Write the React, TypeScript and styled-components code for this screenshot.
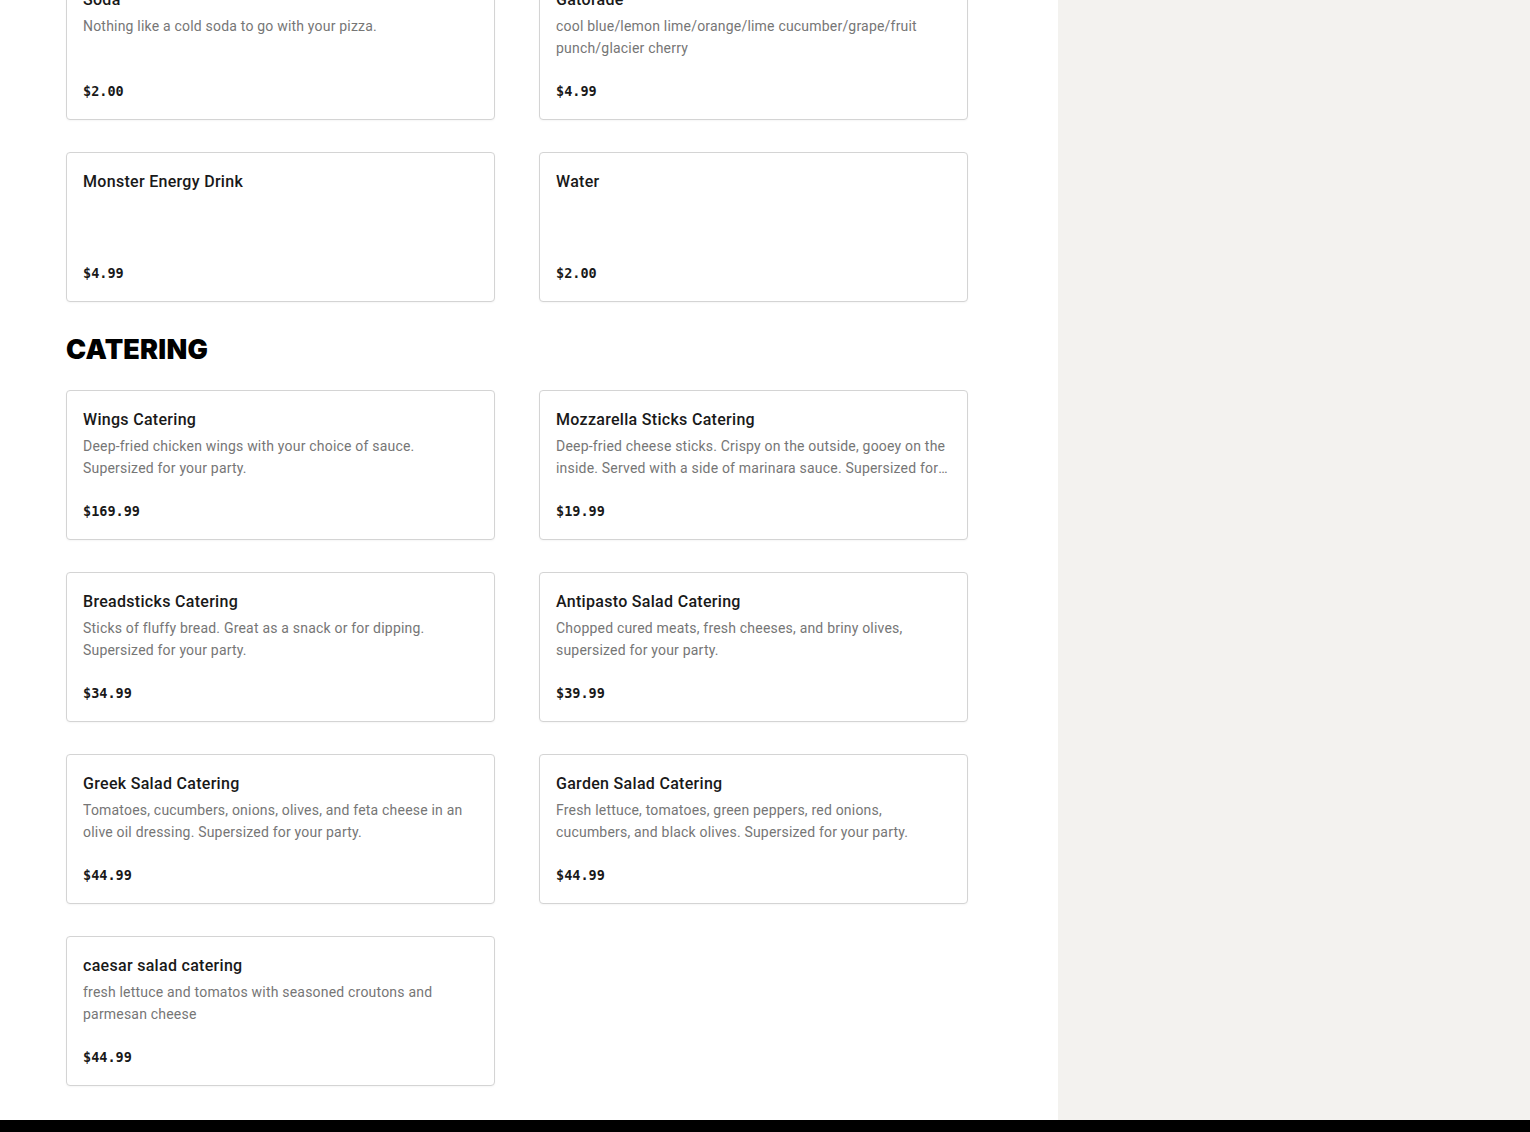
import React from "react";
import styled, { createGlobalStyle } from "styled-components";

const Global = createGlobalStyle`
  html, body { margin: 0; padding: 0; background: #ffffff; }
  body { font-family: Roboto, "Liberation Sans", Arial, sans-serif; overflow: hidden; }
  * { box-sizing: border-box; }
`;

type Item = { name: string; desc?: string; price: string };

const drinks: Item[] = [
  { name: "Soda", desc: "Nothing like a cold soda to go with your pizza.", price: "$2.00" },
  { name: "Gatorade", desc: "cool blue/lemon lime/orange/lime cucumber/grape/fruit punch/glacier cherry", price: "$4.99" },
  { name: "Monster Energy Drink", price: "$4.99" },
  { name: "Water", price: "$2.00" },
];

const catering: Item[] = [
  { name: "Wings Catering", desc: "Deep-fried chicken wings with your choice of sauce. Supersized for your party.", price: "$169.99" },
  { name: "Mozzarella Sticks Catering", desc: "Deep-fried cheese sticks. Crispy on the outside, gooey on the inside. Served with a side of marinara sauce. Supersized for your party.", price: "$19.99" },
  { name: "Breadsticks Catering", desc: "Sticks of fluffy bread. Great as a snack or for dipping. Supersized for your party.", price: "$34.99" },
  { name: "Antipasto Salad Catering", desc: "Chopped cured meats, fresh cheeses, and briny olives, supersized for your party.", price: "$39.99" },
  { name: "Greek Salad Catering", desc: "Tomatoes, cucumbers, onions, olives, and feta cheese in an olive oil dressing. Supersized for your party.", price: "$44.99" },
  { name: "Garden Salad Catering", desc: "Fresh lettuce, tomatoes, green peppers, red onions, cucumbers, and black olives. Supersized for your party.", price: "$44.99" },
  { name: "caesar salad catering", desc: "fresh lettuce and tomatos with seasoned croutons and parmesan cheese", price: "$44.99" },
];

const Page = styled.div`
  display: flex;
  flex-direction: column;
  height: 1132px;
`;

const Body = styled.div`
  display: flex;
  flex: 1;
  min-height: 0;
  overflow: hidden;
`;

const Main = styled.main`
  width: 1058px;
  flex-shrink: 0;
  background: #ffffff;
  padding: 0 0 0 66px;
`;

const Scroller = styled.div`
  margin-top: -30px;
  display: flex;
  flex-direction: column;
`;

const Sidebar = styled.aside`
  flex: 1;
  background: #f3f2ef;
`;

const Footer = styled.footer`
  height: 12px;
  background: #000000;
  flex-shrink: 0;
`;

const Section = styled.section`
  display: flex;
  flex-direction: column;
`;

const SectionTitle = styled.h2`
  margin: 32px 0 24px;
  font-family: Inter, "DejaVu Sans", sans-serif;
  font-weight: 900;
  font-size: 27px;
  line-height: 32px;
  letter-spacing: 0.2px;
  color: #000000;
  text-transform: uppercase;
`;

const Grid = styled.div`
  display: grid;
  grid-template-columns: 429px 429px;
  column-gap: 44px;
  row-gap: 32px;
`;

const Card = styled.div`
  height: 150px;
  border: 1px solid #d4d4d4;
  border-radius: 4px;
  background: #ffffff;
  box-shadow: 0 1px 2px rgba(0, 0, 0, 0.04);
  padding: 17px 16px 18px;
  display: flex;
  flex-direction: column;
`;

const Name = styled.div`
  font-family: Roboto, "Liberation Sans", sans-serif;
  font-size: 16px;
  font-weight: 500;
  line-height: 24px;
  letter-spacing: 0.3px;
  color: #191919;
`;

const Desc = styled.div`
  margin-top: 3px;
  font-family: Roboto, "Liberation Sans", sans-serif;
  font-size: 14px;
  line-height: 22px;
  letter-spacing: 0.2px;
  color: #767676;
  padding-right: 2px;
  display: -webkit-box;
  -webkit-line-clamp: 2;
  -webkit-box-orient: vertical;
  overflow: hidden;
`;

const Price = styled.div`
  margin-top: auto;
  font-family: "DejaVu Sans Mono", "Liberation Mono", monospace;
  font-size: 13.5px;
  font-weight: 700;
  line-height: 20px;
  color: #191919;
`;

const ItemCard = ({ item }: { item: Item }) => (
  <Card>
    <Name>{item.name}</Name>
    {item.desc && <Desc>{item.desc}</Desc>}
    <Price>{item.price}</Price>
  </Card>
);

export default function App() {
  return (
    <>
      <Global />
      <Page>
        <Body>
          <Main>
            <Scroller>
              <Section>
                <Grid>
                  {drinks.map((d) => (
                    <ItemCard key={d.name} item={d} />
                  ))}
                </Grid>
              </Section>
              <Section>
                <SectionTitle>Catering</SectionTitle>
                <Grid>
                  {catering.map((d) => (
                    <ItemCard key={d.name} item={d} />
                  ))}
                </Grid>
              </Section>
            </Scroller>
          </Main>
          <Sidebar />
        </Body>
        <Footer />
      </Page>
    </>
  );
}
